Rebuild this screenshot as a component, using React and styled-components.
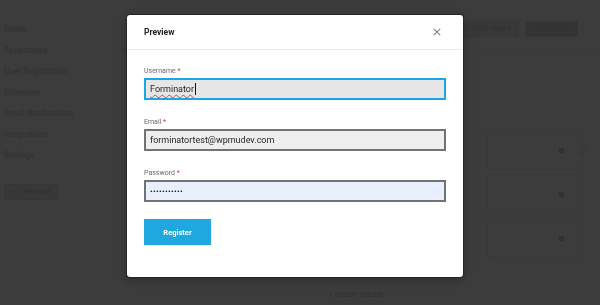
import styled, { createGlobalStyle } from "styled-components";

const Global = createGlobalStyle`
  * { box-sizing: border-box; }
  html, body { margin: 0; padding: 0; }
  body {
    width: 600px;
    height: 305px;
    overflow: hidden;
    background: #3c3c3c;
    font-family: Roboto, "Liberation Sans", Arial, sans-serif;
  }
`;

const GearIcon = () => (
  <svg width="7" height="7" viewBox="0 0 16 16">
    <circle cx="8" cy="8" r="6" fill="#2f2f2f" />
    <circle cx="8" cy="8" r="2" fill="#3c3c3c" />
  </svg>
);

const EyeIcon = () => (
  <svg width="9" height="7" viewBox="0 0 20 14">
    <path d="M1 7c3-5 15-5 18 0-3 5-15 5-18 0z" fill="none" stroke="#343434" strokeWidth="2" />
    <circle cx="10" cy="7" r="2.5" fill="#343434" />
  </svg>
);

const LinkIcon = () => (
  <svg width="9" height="9" viewBox="0 0 16 16">
    <path d="M6 10l4-4M7 4l2-2a3 3 0 014 4l-2 2M9 12l-2 2a3 3 0 01-4-4l2-2" fill="none" stroke="#343434" strokeWidth="1.6" />
  </svg>
);

const CloseIcon = () => (
  <svg width="8" height="8" viewBox="0 0 10 10">
    <path d="M1 1l8 8M9 1l-8 8" stroke="#7a7a7a" strokeWidth="1.3" />
  </svg>
);

export default function App() {
  const sections = [
    "Fields",
    "Appearance",
    "User Registration",
    "Behaviour",
    "Email Notifications",
    "Integrations",
    "Settings",
  ];

  return (
    <>
      <Global />
      <Page>
        <Sidebar>
          <Nav>
            {sections.map((s, i) => (
              <NavItem key={s} $active={i === 0}>
                {s}
              </NavItem>
            ))}
          </Nav>
          <GhostButton $w={54} $top={22}>
            <EyeIcon />
            PREVIEW
          </GhostButton>
        </Sidebar>
        <Main>
          <TopBar>
            <GhostButton $w={54}>SAVE DRAFT</GhostButton>
            <GhostButton $w={53} $dark>
              PUBLISH
            </GhostButton>
          </TopBar>
          <Cards>
            {[0, 1, 2].map((i) => (
              <CardRow key={i}>
                <Card>
                  <GearIcon />
                </Card>
                <LinkSlot>{i === 0 ? <LinkIcon /> : null}</LinkSlot>
              </CardRow>
            ))}
          </Cards>
          <Insert>+ INSERT FIELDS</Insert>
        </Main>
      </Page>

      <Overlay>
        <Modal>
          <Header>
            <Title>Preview</Title>
            <Close>
              <CloseIcon />
            </Close>
          </Header>
          <Body>
            <Field>
              <Label>
                Username <Req>*</Req>
              </Label>
              <Input $focus>
                <Typed>Forminator</Typed>
                <Caret />
              </Input>
            </Field>
            <Field>
              <Label>
                Email <Req>*</Req>
              </Label>
              <Input>forminatortest@wpmudev.com</Input>
            </Field>
            <Field>
              <Label>
                Password <Req>*</Req>
              </Label>
              <Input $autofill>
                <Dots>•••••••••••</Dots>
              </Input>
            </Field>
            <Register>Register</Register>
          </Body>
        </Modal>
      </Overlay>
    </>
  );
}

const Page = styled.div`
  display: flex;
  width: 600px;
  height: 305px;
  background: #3c3c3c;
  color: #333333;
`;

const Sidebar = styled.div`
  width: 120px;
  padding: 22px 0 0 4px;
  display: flex;
  flex-direction: column;
`;

const Nav = styled.div`
  display: flex;
  flex-direction: column;
  row-gap: 7px;
`;

const NavItem = styled.div`
  font-size: 8.2px;
  line-height: 14px;
  font-weight: ${(p) => (p.$active ? 700 : 500)};
  color: #333333;
`;

const GhostButton = styled.div`
  display: inline-flex;
  align-items: center;
  justify-content: center;
  column-gap: 4px;
  width: ${(p) => p.$w}px;
  height: 16px;
  border-radius: 2px;
  background: ${(p) => (p.$dark ? "#343434" : "#383838")};
  border: 1px solid #363636;
  font-size: 6.5px;
  font-weight: 700;
  color: #333333;
  align-self: flex-start;
  margin-top: ${(p) => p.$top || 0}px;
`;

const Main = styled.div`
  flex: 1;
  display: flex;
  flex-direction: column;
`;

const TopBar = styled.div`
  height: 49px;
  display: flex;
  justify-content: flex-end;
  column-gap: 6px;
  padding: 21px 22px 0 0;
  border-bottom: 1px solid #3a3a3a;
`;

const Cards = styled.div`
  margin: 82px 0 0 0;
  display: flex;
  flex-direction: column;
  row-gap: 5px;
  align-items: flex-end;
`;

const CardRow = styled.div`
  display: flex;
  align-items: center;
`;

const Card = styled.div`
  width: 96px;
  height: 39px;
  border: 1px solid #393939;
  border-radius: 3px;
  display: flex;
  align-items: center;
  justify-content: flex-end;
  padding-right: 17px;
`;

const LinkSlot = styled.div`
  width: 22px;
  display: flex;
  justify-content: flex-start;
  margin-left: -5px;
`;

const Insert = styled.div`
  margin-top: 33px;
  text-align: center;
  font-size: 7px;
  font-weight: 700;
  color: #333333;
  padding-right: 8px;
`;

const Overlay = styled.div`
  position: fixed;
  inset: 0;
  display: flex;
  align-items: flex-start;
  padding: 15px 0 0 127px;
`;

const Modal = styled.div`
  width: 336px;
  height: 262px;
  background: #ffffff;
  border-radius: 3px;
  box-shadow: 0 0 0 1px #262626, 0 2px 8px rgba(0, 0, 0, 0.35);
`;

const Header = styled.div`
  height: 35px;
  display: flex;
  align-items: center;
  justify-content: space-between;
  padding: 0 22px 0 17px;
  border-bottom: 1px solid #ebebeb;
`;

const Title = styled.div`
  font-size: 8.5px;
  font-weight: 700;
  color: #222222;
`;

const Close = styled.div`
  display: flex;
  align-items: center;
`;

const Body = styled.div`
  padding: 16px 17px 0 17px;
  display: flex;
  flex-direction: column;
  row-gap: 17px;
`;

const Field = styled.div`
  display: flex;
  flex-direction: column;
  row-gap: 1px;
`;

const Label = styled.div`
  font-size: 7px;
  line-height: 11px;
  color: #6a6a6a;
`;

const Req = styled.span`
  color: #dd3333;
`;

const Input = styled.div`
  height: 22px;
  display: flex;
  align-items: center;
  padding: 0 4px;
  font-size: 9px;
  color: #1e1e1e;
  border: 2px solid ${(p) => (p.$focus ? "#17a8e3" : "#727272")};
  background: ${(p) =>
    p.$focus ? "#e6e6e6" : p.$autofill ? "#e8f0fe" : "#eeeeee"};
`;

const Typed = styled.span`
  text-decoration: underline wavy #e04040;
  text-decoration-thickness: 1px;
  text-underline-offset: 2px;
`;

const Caret = styled.span`
  width: 1px;
  height: 12px;
  background: #111111;
  margin-left: 1px;
`;

const Dots = styled.span`
  font-size: 8px;
  letter-spacing: 0.3px;
  color: #111111;
`;

const Register = styled.div`
  width: 67px;
  height: 26px;
  background: #1fa8e0;
  color: #ffffff;
  font-size: 7.5px;
  font-weight: 700;
  display: flex;
  align-items: center;
  justify-content: center;
`;
